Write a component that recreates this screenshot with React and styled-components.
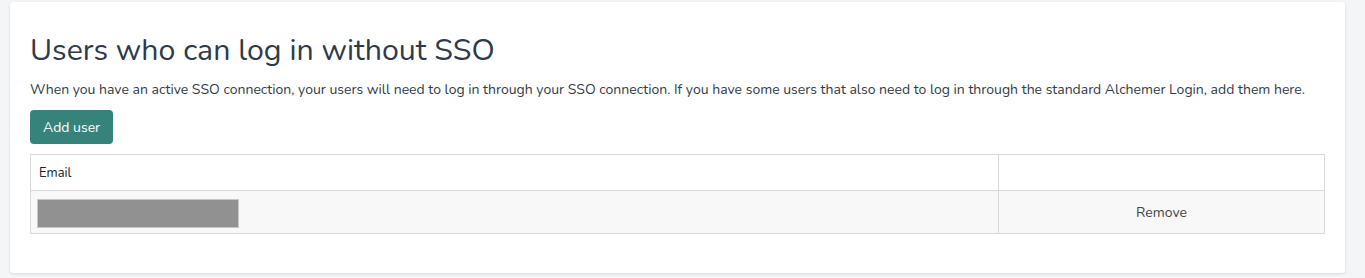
import React from "react";
import styled, { createGlobalStyle } from "styled-components";

const GlobalStyle = createGlobalStyle`
  body {
    margin: 0;
    background: #f4f5f7;
    font-family: Nunito, Lato, "Open Sans", sans-serif;
  }
`;

const users = [{ id: 1 }];

const App = () => {
  return (
    <>
      <GlobalStyle />
      <Page>
        <Card>
          <Title>Users who can log in without SSO</Title>
          <Intro>
            When you have an active SSO connection, your users will need to log in through your SSO
            connection. If you have some users that also need to log in through the standard Alchemer
            Login, add them here.
          </Intro>
          <AddButton>Add user</AddButton>
          <Table>
            <thead>
              <tr>
                <HeadCell>Email</HeadCell>
                <HeadCell $action />
              </tr>
            </thead>
            <tbody>
              {users.map((u) => (
                <tr key={u.id}>
                  <BodyCell>
                    <Redacted />
                  </BodyCell>
                  <BodyCell $action>Remove</BodyCell>
                </tr>
              ))}
            </tbody>
          </Table>
        </Card>
      </Page>
    </>
  );
};

export default App;

const Page = styled.div`
  padding: 2px 20px 0 10px;
  height: 278px;
  box-sizing: border-box;
`;

const Card = styled.div`
  background: #fff;
  border-radius: 3px;
  box-shadow: 0 1px 3px rgba(0, 0, 0, 0.12);
  padding: 30px 20px 39px 20px;
`;

const Title = styled.h2`
  margin: 0 0 12px;
  font-size: 30.3px;
  font-weight: 400;
  line-height: 36px;
  color: #2f3a4b;
`;

const Intro = styled.p`
  margin: 0 0 10px;
  font-size: 14px;
  line-height: 20px;
  color: #333b47;
`;

const AddButton = styled.button`
  display: block;
  height: 34px;
  padding: 0 13px;
  border: none;
  border-radius: 4px;
  background: #35837b;
  color: #fff;
  font-family: inherit;
  font-size: 14px;
  cursor: pointer;
  margin-bottom: 10px;
`;

const Table = styled.table`
  width: 100%;
  border-collapse: collapse;
  font-size: 13px;
`;

const HeadCell = styled.th`
  height: 35px;
  padding: 0 8px;
  border: 1px solid #d9d9d9;
  text-align: left;
  font-weight: 400;
  color: #222;
  width: ${(p) => (p.$action ? "309px" : "auto")};
`;

const BodyCell = styled.td`
  height: 42px;
  padding: 0 6px;
  border: 1px solid #d9d9d9;
  background: #f8f8f8;
  color: #444;
  font-size: ${(p) => (p.$action ? "14px" : "13px")};
  text-align: ${(p) => (p.$action ? "center" : "left")};
  vertical-align: middle;
`;

const Redacted = styled.div`
  width: 200px;
  height: 27px;
  background: #919191;
  border: 1px solid #c6c6c6;
  margin-top: 2px;
`;
